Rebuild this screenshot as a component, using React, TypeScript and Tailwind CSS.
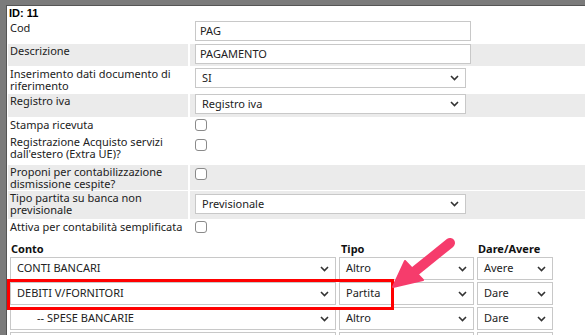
import React from "react";

const Chevron = () => (
  <svg width="9" height="6" viewBox="0 0 9 6" className="shrink-0">
    <path d="M1 1 L4.5 4.5 L8 1" fill="none" stroke="#333" strokeWidth="1.6" />
  </svg>
);

const Select = ({ value, cls }: { value: string; cls: string }) => (
  <div className={`flex items-center justify-between border border-[#c8c8c8] bg-white pl-[6px] pr-[6px] text-[11px] text-[#222] ${cls}`}>
    <span>{value}</span>
    <Chevron />
  </div>
);

const Input = ({ value }: { value: string }) => (
  <div className="flex h-[20px] w-[276px] items-center border border-[#c8c8c8] bg-white pl-[4px] text-[11px] text-[#222]">
    {value}
  </div>
);

const Check = ({ cls }: { cls: string }) => (
  <div className={`h-[12px] w-[12px] rounded-[3px] border border-[#8a8a8a] bg-white ${cls}`} />
);

type Row = { label: string[]; gray: boolean; h: number; lpt: string; content: React.ReactNode };

export default function App() {
  const rows: Row[] = [
    { label: ["Cod"], gray: false, h: 22, lpt: "pt-[1px]", content: <Input value="PAG" /> },
    { label: ["Descrizione"], gray: true, h: 22, lpt: "pt-[1px]", content: <Input value="PAGAMENTO" /> },
    {
      label: ["Inserimento dati documento di", "riferimento"],
      gray: false,
      h: 26,
      lpt: "pt-[1px]",
      content: <Select value="SI" cls="h-[20px] w-[271px] mt-[1px]" />,
    },
    {
      label: ["Registro iva"],
      gray: true,
      h: 23,
      lpt: "pt-[1px]",
      content: <Select value="Registro iva" cls="h-[20px] w-[271px]" />,
    },
    { label: ["Stampa ricevuta"], gray: false, h: 17, lpt: "pt-[1px]", content: <Check cls="mt-[1px]" /> },
    {
      label: ["Registrazione Acquisto servizi", "dall'estero (Extra UE)?"],
      gray: false,
      h: 28,
      lpt: "pt-0",
      content: <Check cls="mt-[3px]" />,
    },
    {
      label: ["Proponi per contabilizzazione", "dismissione cespite?"],
      gray: true,
      h: 25,
      lpt: "pt-[1px]",
      content: <Check cls="mt-[3px]" />,
    },
    {
      label: ["Tipo partita su banca non", "previsionale"],
      gray: true,
      h: 28,
      lpt: "pt-[1px]",
      content: <Select value="Previsionale" cls="h-[20px] w-[271px] mt-[3px]" />,
    },
    {
      label: ["Attiva per contabilità semplificata"],
      gray: false,
      h: 18,
      lpt: "pt-[1px]",
      content: <Check cls="mt-[1px]" />,
    },
  ];

  const tableRows = [
    { conto: "CONTI BANCARI", tipo: "Altro", da: "Avere" },
    { conto: "DEBITI V/FORNITORI", tipo: "Partita", da: "Dare" },
    { conto: "-- SPESE BANCARIE", tipo: "Altro", da: "Dare", indent: true },
    { conto: "", tipo: "", da: "" },
  ];

  return (
    <div
      className="relative h-[335px] w-[585px] overflow-hidden bg-[#7b7b7b] pl-[6px] pt-[5px]"
      style={{ fontFamily: '"Noto Sans", "Open Sans", sans-serif' }}
    >
      <div className="h-full w-full border-l border-t border-[#555] bg-white pl-[1px]">
        <div
          className="h-[15px] pl-[1px] pt-[1px] text-[11px] font-bold leading-[13px] text-black"
          style={{ fontFamily: '"Liberation Sans", Arial, sans-serif' }}
        >
          ID: 11
        </div>
        <div className="flex flex-col gap-[1px]">
          {rows.map((r, i) => (
            <div key={i} className="flex gap-[2px]" style={{ height: r.h }}>
              <div
                className={`w-[180px] shrink-0 pl-[2px] text-[11px] leading-[12px] text-[#222] ${r.lpt} ${
                  r.gray ? "bg-[#ebebeb]" : ""
                }`}
              >
                {r.label.map((l, j) => (
                  <div key={j}>{l}</div>
                ))}
              </div>
              <div className={`flex-1 pl-[3px] ${r.gray ? "bg-[#ebebeb]" : ""}`}>
                <div className="pl-[2px]">{r.content}</div>
              </div>
            </div>
          ))}
        </div>
        <div className="mt-[1px] flex flex-col gap-[2px] pl-[2px]">
          <div className="flex h-[16px] items-end text-[11px] font-bold leading-[13px] text-[#111]">
            <div className="w-[330px] pl-[1px]">Conto</div>
            <div className="w-[138px] pl-[1px]">Tipo</div>
            <div>Dare/Avere</div>
          </div>
          {tableRows.map((t, i) => (
            <div key={i} className="flex gap-[3px]">
              <Select value={t.conto} cls={`h-[23px] w-[326px] ${t.indent ? "pl-[26px]" : ""}`} />
              <Select value={t.tipo} cls="h-[23px] w-[135px]" />
              <Select value={t.da} cls="h-[23px] w-[76px]" />
            </div>
          ))}
        </div>
      </div>

      <div className="absolute left-[7px] top-[279px] h-[31px] w-[387px] border-[3px] border-[#ff0000]" />
      <svg className="absolute left-0 top-0" width="585" height="335" viewBox="0 0 585 335">
        <line x1="450" y1="243" x2="414" y2="272" stroke="#f63c6c" strokeWidth="10" strokeLinecap="round" />
        <polygon points="393,287 405,261 423,280" fill="#f63c6c" stroke="#f63c6c" strokeWidth="2" strokeLinejoin="round" />
      </svg>
    </div>
  );
}
